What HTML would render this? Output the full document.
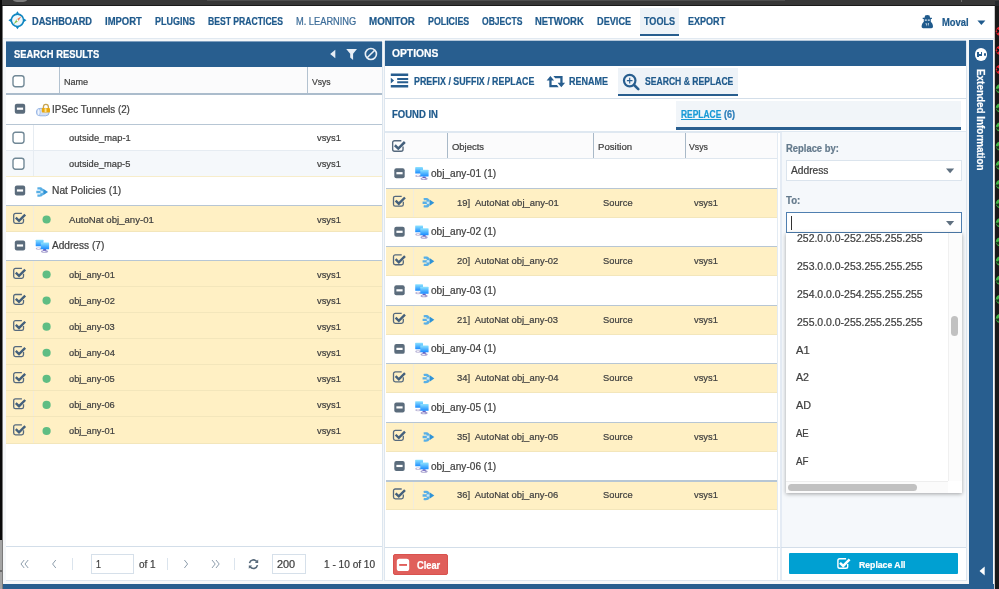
<!DOCTYPE html>
<html lang="en"><head><meta charset="utf-8"><title>Search &amp; Replace</title>
<style>
html,body{margin:0;padding:0}
body{width:999px;height:589px;position:relative;overflow:hidden;background:#1c1c1c;font-family:"Liberation Sans", sans-serif;}
#s div{position:absolute;box-sizing:border-box}
#s svg{position:absolute;overflow:visible}
#s,#t{position:absolute;left:0;top:0;width:999px;height:589px}
#t{will-change:transform}
#t span{position:absolute;white-space:pre;line-height:1;display:block;transform-origin:0 0;-webkit-text-stroke:0.22px currentColor}
</style></head>
<body>
<div id="s">
<svg width="0" height="0" style="left:0;top:0"><defs><linearGradient id="pcg" x1="0" y1="0" x2="0" y2="1"><stop offset="0" stop-color="#8fe4ff"/><stop offset="1" stop-color="#1a8bff"/></linearGradient></defs></svg>
<div style="left:0px;top:0px;width:999px;height:5px;background:#373737;"></div>
<div style="left:0px;top:5px;width:999px;height:1px;background:#1a1a1a;"></div>
<div style="left:207px;top:0px;width:578px;height:1px;background:#4e4e4e;"></div>
<div style="left:995px;top:1px;width:4px;height:5px;background:#25282b;"></div>
<div style="left:961px;top:0px;width:1px;height:2px;background:#6e6e6e;"></div>
<div style="left:12.6px;top:-2.4px;width:14.4px;height:4.6px;border-radius:50%;background:#7c7c7c"></div>
<div style="left:0px;top:0px;width:2.3px;height:540px;background:#0a0a0a;"></div>
<div style="left:0px;top:540px;width:2.3px;height:49px;background:#a4a4a4;"></div>
<div style="left:0px;top:570px;width:2.3px;height:2px;background:#6a6a6a;"></div>
<div style="left:2.3px;top:6px;width:0.9px;height:583px;background:#7a7a7a;"></div>
<div style="left:3.2px;top:6px;width:991.1px;height:583px;background:#f5f7f9;"></div>
<div style="left:994.3px;top:6px;width:0.9px;height:583px;background:#c9c9c9;"></div>
<div style="left:995.2px;top:6px;width:3.8px;height:583px;background:#191919;"></div>
<div style="left:3.2px;top:6px;width:991.1px;height:31.8px;background:#ffffff;"></div>
<div style="left:3.2px;top:37.8px;width:991.1px;height:1.5px;background:#e1e9f1;"></div>
<div style="left:640px;top:8px;width:39px;height:28px;background:#eef3f8;"></div>
<div style="left:640px;top:34px;width:39px;height:2px;background:#285e8f;"></div>
<div style="left:3px;top:584px;width:991px;height:5px;background:#285e8f;"></div>
<div style="left:5.5px;top:42px;width:377.0px;height:538.6px;background:#dde6ef;"></div>
<div style="left:6px;top:42px;width:376px;height:538px;background:#ffffff;"></div>
<div style="left:6px;top:42px;width:376px;height:25px;background:#285e8f;"></div>
<div style="left:6px;top:41px;width:376px;height:1px;background:#7f9fbf;"></div>
<div style="left:6px;top:67px;width:376px;height:26px;background:#fbfbfc;"></div>
<div style="left:6px;top:93px;width:376px;height:2px;background:#abbccc;"></div>
<div style="left:59px;top:67px;width:1px;height:26px;background:#b3c2d0;"></div>
<div style="left:307px;top:67px;width:1px;height:26px;background:#b3c2d0;"></div>
<div style="left:6px;top:95px;width:376px;height:30px;background:#ffffff;"></div>
<div style="left:6px;top:123.8px;width:376px;height:1.5px;background:#b7c6d4;"></div>
<div style="left:6px;top:125px;width:376px;height:26px;background:#ffffff;"></div>
<div style="left:6px;top:150px;width:376px;height:1px;background:#e6ecf2;"></div>
<div style="left:33px;top:125px;width:1px;height:25px;background:#e6ecf2;"></div>
<div style="left:6px;top:151px;width:376px;height:26px;background:#f5f8fb;"></div>
<div style="left:6px;top:176px;width:376px;height:1px;background:#e6ecf2;"></div>
<div style="left:33px;top:151px;width:1px;height:25px;background:#e6ecf2;"></div>
<div style="left:6px;top:177px;width:376px;height:29px;background:#ffffff;"></div>
<div style="left:6px;top:204.8px;width:376px;height:1.5px;background:#b7c6d4;"></div>
<div style="left:6px;top:176px;width:376px;height:1px;background:#f7edcb;"></div>
<div style="left:6px;top:206px;width:376px;height:26px;background:#fff0c4;"></div>
<div style="left:6px;top:231px;width:376px;height:1px;background:#f3e6bb;"></div>
<div style="left:33px;top:206px;width:1px;height:25px;background:#f1ecdc;"></div>
<div style="left:6px;top:232px;width:376px;height:29px;background:#ffffff;"></div>
<div style="left:6px;top:259.8px;width:376px;height:1.5px;background:#b7c6d4;"></div>
<div style="left:6px;top:261px;width:376px;height:26px;background:#fff0c4;"></div>
<div style="left:6px;top:286px;width:376px;height:1px;background:#f3e6bb;"></div>
<div style="left:33px;top:261px;width:1px;height:25px;background:#f1ecdc;"></div>
<div style="left:6px;top:287px;width:376px;height:26px;background:#fff0c4;"></div>
<div style="left:6px;top:312px;width:376px;height:1px;background:#f3e6bb;"></div>
<div style="left:33px;top:287px;width:1px;height:25px;background:#f1ecdc;"></div>
<div style="left:6px;top:313px;width:376px;height:26px;background:#fff0c4;"></div>
<div style="left:6px;top:338px;width:376px;height:1px;background:#f3e6bb;"></div>
<div style="left:33px;top:313px;width:1px;height:25px;background:#f1ecdc;"></div>
<div style="left:6px;top:339px;width:376px;height:26px;background:#fff0c4;"></div>
<div style="left:6px;top:364px;width:376px;height:1px;background:#f3e6bb;"></div>
<div style="left:33px;top:339px;width:1px;height:25px;background:#f1ecdc;"></div>
<div style="left:6px;top:365px;width:376px;height:26px;background:#fff0c4;"></div>
<div style="left:6px;top:390px;width:376px;height:1px;background:#f3e6bb;"></div>
<div style="left:33px;top:365px;width:1px;height:25px;background:#f1ecdc;"></div>
<div style="left:6px;top:391px;width:376px;height:26px;background:#fff0c4;"></div>
<div style="left:6px;top:416px;width:376px;height:1px;background:#f3e6bb;"></div>
<div style="left:33px;top:391px;width:1px;height:25px;background:#f1ecdc;"></div>
<div style="left:6px;top:417px;width:376px;height:27px;background:#fff0c4;"></div>
<div style="left:6px;top:443px;width:376px;height:1px;background:#f3e6bb;"></div>
<div style="left:33px;top:417px;width:1px;height:26px;background:#f1ecdc;"></div>
<div style="left:6px;top:546px;width:376px;height:1px;background:#d3dee9;"></div>
<div style="left:90.5px;top:553.5px;width:43px;height:20px;border:1px solid #d6e0ea;background:#fff"></div>
<div style="left:271.5px;top:553.5px;width:34.5px;height:20px;border:1px solid #d6e0ea;background:#fff"></div>
<div style="left:72px;top:558px;width:1px;height:12px;background:#dbe4ed;"></div>
<div style="left:167px;top:558px;width:1px;height:12px;background:#dbe4ed;"></div>
<div style="left:234px;top:558px;width:1px;height:12px;background:#dbe4ed;"></div>
<div style="left:384px;top:41px;width:583px;height:540px;background:#dde6ef;"></div>
<div style="left:385px;top:41px;width:581px;height:539px;background:#ffffff;"></div>
<div style="left:385px;top:41px;width:581px;height:25px;background:#285e8f;"></div>
<div style="left:385px;top:40px;width:581px;height:1px;background:#b3c6d9;"></div>
<div style="left:618px;top:68px;width:120px;height:28px;background:#eef3f8;"></div>
<div style="left:618px;top:94px;width:120px;height:2.4px;background:#285e8f;"></div>
<div style="left:385px;top:98px;width:581px;height:1px;background:#d3dee9;"></div>
<div style="left:676px;top:100.5px;width:285px;height:29.0px;background:#f1f5f9;"></div>
<div style="left:676px;top:127px;width:285px;height:2.5px;background:#285e8f;"></div>
<div style="left:385px;top:131px;width:581px;height:2px;background:#dfe8f1;"></div>
<div style="left:386px;top:133px;width:391px;height:25px;background:#fbfbfc;"></div>
<div style="left:386px;top:158px;width:391px;height:1px;background:#dfe7ef;"></div>
<div style="left:447px;top:133px;width:1px;height:25px;background:#a9b9c8;"></div>
<div style="left:593px;top:133px;width:1px;height:25px;background:#a9b9c8;"></div>
<div style="left:685px;top:133px;width:1px;height:25px;background:#a9b9c8;"></div>
<div style="left:777px;top:132px;width:1px;height:448px;background:#e3ebf3;"></div>
<div style="left:386px;top:159px;width:391px;height:29.8px;background:#ffffff;"></div>
<div style="left:386px;top:187.60000000000002px;width:391px;height:1.5px;background:#b7c6d4;"></div>
<div style="left:386px;top:188.8px;width:391px;height:28.8px;background:#fff0c4;"></div>
<div style="left:386px;top:216.6px;width:391px;height:1.0px;background:#f3e6bb;"></div>
<div style="left:413px;top:188.8px;width:1px;height:27.8px;background:#f1ecdc;"></div>
<div style="left:386px;top:217.6px;width:391px;height:29.74px;background:#ffffff;"></div>
<div style="left:386px;top:246.14000000000001px;width:391px;height:1.5px;background:#b7c6d4;"></div>
<div style="left:386px;top:247.34px;width:391px;height:28.8px;background:#fff0c4;"></div>
<div style="left:386px;top:275.14px;width:391px;height:1.0px;background:#f3e6bb;"></div>
<div style="left:413px;top:247.34px;width:1px;height:27.8px;background:#f1ecdc;"></div>
<div style="left:386px;top:276.14px;width:391px;height:29.74px;background:#ffffff;"></div>
<div style="left:386px;top:304.68px;width:391px;height:1.5px;background:#b7c6d4;"></div>
<div style="left:386px;top:305.88px;width:391px;height:28.8px;background:#fff0c4;"></div>
<div style="left:386px;top:333.68px;width:391px;height:1.0px;background:#f3e6bb;"></div>
<div style="left:413px;top:305.88px;width:1px;height:27.8px;background:#f1ecdc;"></div>
<div style="left:386px;top:334.68px;width:391px;height:29.74px;background:#ffffff;"></div>
<div style="left:386px;top:363.22px;width:391px;height:1.5px;background:#b7c6d4;"></div>
<div style="left:386px;top:364.42px;width:391px;height:28.8px;background:#fff0c4;"></div>
<div style="left:386px;top:392.22px;width:391px;height:1.0px;background:#f3e6bb;"></div>
<div style="left:413px;top:364.42px;width:1px;height:27.8px;background:#f1ecdc;"></div>
<div style="left:386px;top:393.22px;width:391px;height:29.74px;background:#ffffff;"></div>
<div style="left:386px;top:421.76px;width:391px;height:1.5px;background:#b7c6d4;"></div>
<div style="left:386px;top:422.96px;width:391px;height:28.8px;background:#fff0c4;"></div>
<div style="left:386px;top:450.76px;width:391px;height:1.0px;background:#f3e6bb;"></div>
<div style="left:413px;top:422.96px;width:1px;height:27.8px;background:#f1ecdc;"></div>
<div style="left:386px;top:451.76px;width:391px;height:29.74px;background:#ffffff;"></div>
<div style="left:386px;top:480.3px;width:391px;height:1.5px;background:#b7c6d4;"></div>
<div style="left:386px;top:481.5px;width:391px;height:28.8px;background:#fff0c4;"></div>
<div style="left:386px;top:509.3px;width:391px;height:1.0px;background:#f3e6bb;"></div>
<div style="left:413px;top:481.5px;width:1px;height:27.8px;background:#f1ecdc;"></div>
<div style="left:385px;top:547px;width:581px;height:1px;background:#d3dee9;"></div>
<div style="left:393px;top:554px;width:55px;height:21px;background:#e05f5b;border:1px solid #d9524e;border-radius:2px"></div>
<svg style="left:396px;top:558px" width="12.4" height="12.2" viewBox="0 0 12.4 12.2"><g transform="translate(0.800 0.800)"><rect width="12.4" height="12.2" rx="2.6" fill="#fff"/><rect x="2.4" y="5.2" width="7.8" height="1.9" fill="#e05f5b"/></g></svg>
<div style="left:780px;top:132px;width:186px;height:415px;background:#f5f8fb;"></div>
<div style="left:780px;top:132px;width:2px;height:448px;background:#e4ebf4;"></div>
<div style="left:786px;top:160px;width:176px;height:21px;border:1px solid #dbe4ed;background:#fff"></div>
<div style="left:786px;top:212px;width:176px;height:21px;border:1.3px solid #4f7fb0;background:#fff"></div>
<div style="left:791px;top:216px;width:1px;height:14px;background:#333;"></div>
<div style="left:786px;top:233px;width:176px;height:260px;background:#fff;box-shadow:0 1px 4px rgba(0,0,0,.35)"></div>
<div style="left:948px;top:233px;width:14px;height:248px;background:#fcfcfc;"></div>
<div style="left:948px;top:233px;width:1px;height:248px;background:#f0f0f0;"></div>
<div style="left:951.3px;top:316.3px;width:6.7px;height:20px;background:#c1c1c1;border-radius:3.5px"></div>
<div style="left:786px;top:481px;width:162px;height:12px;background:#fbfbfb;"></div>
<div style="left:786px;top:481px;width:162px;height:1px;background:#eeeeee;"></div>
<div style="left:787.7px;top:483.8px;width:129px;height:6.8px;background:#c1c1c1;border-radius:3.5px"></div>
<div style="left:781px;top:547px;width:185px;height:1px;background:#d3dee9;"></div>
<div style="left:789.2px;top:553.4px;width:168.8px;height:20.7px;background:#00a0d2;border-radius:1px"></div>
<div style="left:969px;top:40px;width:24px;height:544px;background:#285e8f;"></div>
<div style="left:974.9px;top:48.3px;width:12.4px;height:12.4px;border-radius:50%;background:#fff"></div>
<svg style="left:7px;top:10px" width="20" height="20" viewBox="-10 -10 20 20"><g transform="translate(0.450 0.250)"><circle r="6.15" fill="#eef7fb" stroke="#0f86c1" stroke-width="1.55"/><path d="M0-9L1.7-6.5H-1.7zM0 9L1.7 6.5H-1.7zM-9 0L-6.5-1.7V1.7zM9 0L6.5-1.7V1.7z" fill="#0f86c1"/><path d="M1.1-2.5L2.5-1.1L-1.1 2.5L-2.5 1.1z" fill="#b6dcef" opacity=".7"/><path d="M3.9-3.9L0.85 0.85L-0.85-0.85z" fill="#f2723f"/><path d="M-3.9 3.9L0.85 0.85L-0.85-0.85z" fill="#86c440"/><circle r="0.9" fill="#ffffff"/></g></svg>
<svg style="left:330px;top:49px" width="6" height="9" viewBox="0 0 6 9"><g transform="translate(0.000 0.500)"><path d="M5.3 0.3V8.7L0.2 4.5z" fill="#e6edf5"/></g></svg>
<svg style="left:345px;top:48px" width="11.4" height="11.2" viewBox="0 0 11.4 11.2"><g transform="translate(0.900 0.900)"><path d="M0.3 0.2H11.1L7.2 4.9V11L4.3 8.7V4.9z" fill="#e9eff6"/></g></svg>
<svg style="left:364px;top:47px" width="12.6" height="12.6" viewBox="0 0 12.6 12.6"><g transform="translate(0.600 0.700)"><circle cx="6.3" cy="6.3" r="5.55" fill="none" stroke="#e9eff6" stroke-width="1.6"/><path d="M2.5 10.1L10.1 2.5" stroke="#e9eff6" stroke-width="1.6"/></g></svg>
<svg style="left:36px;top:103px" width="15" height="13" viewBox="36 103.5 15 13"><g transform="translate(0.000 0.500)"><rect x="36.4" y="108.4" width="12.8" height="7.4" rx="3.6" fill="#d2e0f6" stroke="#8fb0e2" stroke-width=".9"/><ellipse cx="38.6" cy="112.1" rx="1.6" ry="3.2" fill="#f1f6fd" stroke="#9bb8e6" stroke-width=".7"/><path d="M43.4 108.3V107a2.5 2.7 0 0 1 5 0v1.3" fill="none" stroke="#c7a452" stroke-width="1.3"/><rect x="41.8" y="107.9" width="8.2" height="4.6" rx=".9" fill="#e9a70e"/><rect x="44.6" y="108.3" width="1.9" height="3.8" fill="#fbe392"/></g></svg>
<svg style="left:36px;top:186px" width="12" height="10.4" viewBox="0 0 12 10.4"><g transform="translate(0.100 0.800)"><path d="M1.1 0.7C3.5.1 6.7.3 6.9 2.6V7.8C6.7 10.1 3.5 10.3 1.1 9.7L1.5 7.5C3.1 7.9 4.3 7.8 4.4 6.9V6.4H0.2V4H4.4V3.5C4.3 2.6 3.1 2.5 1.5 2.9z" fill="#58afe6"/><path d="M7.1 1.9L11.9 5.2L7.1 8.5z" fill="#2f93d6"/><circle cx="5.6" cy="5.2" r="1.35" fill="#c9e8f9"/></g></svg>
<svg style="left:35px;top:239px" width="13.6" height="13.2" viewBox="0 0 13.6 13.2"><g transform="translate(0.700 0.700)"><ellipse cx="3" cy="8.9" rx="3" ry="1.2" fill="#b8b3d6"/><ellipse cx="2.8" cy="8.7" rx="1.4" ry=".6" fill="#f4f4fa"/><rect x="0" y="0" width="7.8" height="6.6" rx=".5" fill="url(#pcg)"/><ellipse cx="8.9" cy="11.8" rx="3.6" ry="1.3" fill="#a9a3d0"/><ellipse cx="8.4" cy="11.6" rx="1.6" ry=".65" fill="#f4f4fa"/><path d="M7.6 9.4h2.6l.6 1.6h-3.6z" fill="#6a5fc0"/><rect x="5.1" y="2.7" width="8.3" height="6.9" rx=".5" fill="url(#pcg)"/></g></svg>
<svg style="left:390px;top:73px" width="17.4" height="13.9" viewBox="0 0 17.4 13.9"><g transform="translate(0.800 0.600)"><path d="M0 0H17.4V2.3H0zM6.4 4.3H17.4V6.4H6.4zM6.4 7.6H17.4V9.7H6.4zM0 11.5H17.4V13.9H0zM0 4.2L3.3 7L0 9.8z" fill="#285e8f"/></g></svg>
<svg style="left:546px;top:75px" width="18.8" height="11.4" viewBox="0 0 18.8 11.4"><g transform="translate(0.400 0.900)"><path d="M4 0L7.7 4.7H5.2V9.1H10.6L12.3 11.3H2.9V4.7H0.2zM7 0H16.2V6.8H18.7L14.9 11.4L11.2 6.8H13.9V2.3H8.8z" fill="#285e8f"/></g></svg>
<svg style="left:622px;top:73px" width="17" height="17" viewBox="0 0 17 17"><g transform="translate(0.600 0.500)"><circle cx="7.1" cy="7.1" r="5.75" fill="none" stroke="#285e8f" stroke-width="2.2"/><path d="M11.5 11.5L15.7 15.6" stroke="#285e8f" stroke-width="2.6" stroke-linecap="round"/><path d="M4.3 7.1H9.9M7.1 4.3V9.9" stroke="#285e8f" stroke-width="1.15"/></g></svg>
<svg style="left:921px;top:15px" width="11.6" height="13.3" viewBox="0 0 11.6 13.3"><g transform="translate(0.500 0.000)"><path d="M3.6 0.4Q5.8-.4 8 .4L8.6 2.7H10.4V3.9H9.3V6.8L10.6 8.2Q11.6 9.6 11.5 12.1Q11.3 13.2 10 13.2H1.6Q.3 13.2.1 12.1Q0 9.6 1 8.2L2.3 6.8V3.9H1.2V2.7H3z" fill="#1f5a8c"/><path d="M3.3 4.6H5.3V5.7H3.3zM6.3 4.6H8.3V5.7H6.3z" fill="#dce8f2"/><path d="M4 8L5.3 8.4L5.1 11.4zM7.6 8L6.3 8.4L6.5 11.4z" fill="#e8f0f7"/></g></svg>
<svg style="left:977px;top:20px" width="8" height="4.6" viewBox="0 0 8 4.6"><g transform="translate(0.400 0.400)"><path d="M0 0H8L4 4.6z" fill="#1f5a8c"/></g></svg>
<svg style="left:20px;top:559px" width="8.4" height="8.8" viewBox="0 0 8.4 8.8"><g transform="translate(0.400 0.600)"><path d="M3.8.4L.6 4.4 3.8 8.4M7.8.4L4.6 4.4 7.8 8.4" fill="none" stroke="#8c9cab" stroke-width="1"/></g></svg>
<svg style="left:51px;top:559px" width="5" height="8.8" viewBox="0 0 5 8.8"><g transform="translate(0.600 0.600)"><path d="M4.2.4L1 4.4 4.2 8.4" fill="none" stroke="#8c9cab" stroke-width="1"/></g></svg>
<svg style="left:183px;top:559px" width="5" height="8.8" viewBox="0 0 5 8.8"><g transform="translate(0.600 0.600)"><path d="M.8.4L4 4.4.8 8.4" fill="none" stroke="#8c9cab" stroke-width="1"/></g></svg>
<svg style="left:211px;top:559px" width="8.4" height="8.8" viewBox="0 0 8.4 8.8"><g transform="translate(0.400 0.600)"><path d="M.6.4L3.8 4.4.6 8.4M4.6.4L7.8 4.4 4.6 8.4" fill="none" stroke="#8c9cab" stroke-width="1"/></g></svg>
<svg style="left:248px;top:559px" width="10.2" height="10.4" viewBox="0 0 10.2 10.4"><g transform="translate(0.400 0.000)"><g transform="translate(10.2 0) scale(-1 1)"><path d="M9.1 4.2A4.1 4.1 0 0 0 1.8 2.6M1.1 6.2A4.1 4.1 0 0 0 8.4 7.8" fill="none" stroke="#566879" stroke-width="1.6"/><path d="M0.4.6V3.9H3.7zM9.8 9.8V6.5H6.5z" fill="#566879"/></g></g></svg>
<svg style="left:836px;top:556px" width="14" height="14" viewBox="0 0 14 14"><g transform="translate(0.900 0.400)"><path d="M9.2 2.4H2.8a1.8 1.8 0 0 0-1.8 1.8v5.9a1.8 1.8 0 0 0 1.8 1.8h6.2a1.8 1.8 0 0 0 1.8-1.8V7.5" fill="none" stroke="#fff" stroke-width="1.4"/><path d="M3.1 6.4l3.2 3.1 6.4-6.6" fill="none" stroke="#fff" stroke-width="2.5"/></g></svg>
<div style="left:977.3px;top:53.5px;width:5.2px;height:2.1px;background:#285e8f;"></div>
<div style="left:977.3px;top:52.3px;width:1.4px;height:4.5px;background:#285e8f;"></div>
<div style="left:981.3px;top:52.3px;width:1.2px;height:1.7px;background:#285e8f;"></div>
<div style="left:983.6px;top:53.4px;width:2.2px;height:2.2px;border-radius:1px;background:#285e8f"></div>
<svg style="left:995px;top:26px" width="10" height="10" viewBox="0 0 10 10"><g transform="translate(0.400 0.200)"><circle cx="5" cy="5" r="4.6" fill="#e8222e"/><path d="M1.3 3.2L4.9 6.8M4.9 3.2L1.3 6.8" stroke="#111" stroke-width="1.4"/></g></svg>
<svg style="left:995px;top:45px" width="10" height="10" viewBox="0 0 10 10"><g transform="translate(0.400 0.350)"><circle cx="5" cy="5" r="4.6" fill="#e8222e"/><path d="M1.3 3.2L4.9 6.8M4.9 3.2L1.3 6.8" stroke="#111" stroke-width="1.4"/></g></svg>
<svg style="left:995px;top:64px" width="10" height="10" viewBox="0 0 10 10"><g transform="translate(0.400 0.500)"><circle cx="5" cy="5" r="4.6" fill="#e8222e"/><path d="M1.3 3.2L4.9 6.8M4.9 3.2L1.3 6.8" stroke="#111" stroke-width="1.4"/></g></svg>
<svg style="left:995px;top:83px" width="10" height="10" viewBox="0 0 10 10"><g transform="translate(0.400 0.650)"><circle cx="5" cy="5" r="4.6" fill="#45b649"/><path d="M1 5.2L2.7 7L5.2 2.6" fill="none" stroke="#16351a" stroke-width="1.6"/></g></svg>
<svg style="left:995px;top:102px" width="10" height="10" viewBox="0 0 10 10"><g transform="translate(0.400 0.800)"><circle cx="5" cy="5" r="4.6" fill="#45b649"/><path d="M1 5.2L2.7 7L5.2 2.6" fill="none" stroke="#16351a" stroke-width="1.6"/></g></svg>
<svg style="left:995px;top:121px" width="10" height="10" viewBox="0 0 10 10"><g transform="translate(0.400 0.950)"><circle cx="5" cy="5" r="4.6" fill="#45b649"/><path d="M1 5.2L2.7 7L5.2 2.6" fill="none" stroke="#16351a" stroke-width="1.6"/></g></svg>
<svg style="left:995px;top:141px" width="10" height="10" viewBox="0 0 10 10"><g transform="translate(0.400 0.100)"><circle cx="5" cy="5" r="4.6" fill="#45b649"/><path d="M1 5.2L2.7 7L5.2 2.6" fill="none" stroke="#16351a" stroke-width="1.6"/></g></svg>
<svg style="left:995px;top:160px" width="10" height="10" viewBox="0 0 10 10"><g transform="translate(0.400 0.250)"><circle cx="5" cy="5" r="4.6" fill="#45b649"/><path d="M1 5.2L2.7 7L5.2 2.6" fill="none" stroke="#16351a" stroke-width="1.6"/></g></svg>
<svg style="left:995px;top:179px" width="10" height="10" viewBox="0 0 10 10"><g transform="translate(0.400 0.400)"><circle cx="5" cy="5" r="4.6" fill="#45b649"/><path d="M1 5.2L2.7 7L5.2 2.6" fill="none" stroke="#16351a" stroke-width="1.6"/></g></svg>
<svg style="left:995px;top:198px" width="10" height="10" viewBox="0 0 10 10"><g transform="translate(0.400 0.550)"><circle cx="5" cy="5" r="4.6" fill="#45b649"/><path d="M1 5.2L2.7 7L5.2 2.6" fill="none" stroke="#16351a" stroke-width="1.6"/></g></svg>
<svg style="left:995px;top:217px" width="10" height="10" viewBox="0 0 10 10"><g transform="translate(0.400 0.700)"><circle cx="5" cy="5" r="4.6" fill="#45b649"/><path d="M1 5.2L2.7 7L5.2 2.6" fill="none" stroke="#16351a" stroke-width="1.6"/></g></svg>
<svg style="left:995px;top:236px" width="10" height="10" viewBox="0 0 10 10"><g transform="translate(0.400 0.850)"><circle cx="5" cy="5" r="4.6" fill="#45b649"/><path d="M1 5.2L2.7 7L5.2 2.6" fill="none" stroke="#16351a" stroke-width="1.6"/></g></svg>
<svg style="left:995px;top:256px" width="10" height="10" viewBox="0 0 10 10"><g transform="translate(0.400 0.000)"><circle cx="5" cy="5" r="4.6" fill="#45b649"/><path d="M1 5.2L2.7 7L5.2 2.6" fill="none" stroke="#16351a" stroke-width="1.6"/></g></svg>
<svg style="left:995px;top:275px" width="10" height="10" viewBox="0 0 10 10"><g transform="translate(0.400 0.150)"><circle cx="5" cy="5" r="4.6" fill="#45b649"/><path d="M1 5.2L2.7 7L5.2 2.6" fill="none" stroke="#16351a" stroke-width="1.6"/></g></svg>
<svg style="left:995px;top:294px" width="10" height="10" viewBox="0 0 10 10"><g transform="translate(0.400 0.300)"><circle cx="5" cy="5" r="4.6" fill="#45b649"/><path d="M1 5.2L2.7 7L5.2 2.6" fill="none" stroke="#16351a" stroke-width="1.6"/></g></svg>
<svg style="left:995px;top:313px" width="10" height="10" viewBox="0 0 10 10"><g transform="translate(0.400 0.450)"><circle cx="5" cy="5" r="4.6" fill="#45b649"/><path d="M1 5.2L2.7 7L5.2 2.6" fill="none" stroke="#16351a" stroke-width="1.6"/></g></svg>
<svg style="left:415px;top:167px" width="13.6" height="13.2" viewBox="0 0 13.6 13.2"><g transform="translate(0.200 0.000)"><ellipse cx="3" cy="8.9" rx="3" ry="1.2" fill="#b8b3d6"/><ellipse cx="2.8" cy="8.7" rx="1.4" ry=".6" fill="#f4f4fa"/><rect x="0" y="0" width="7.8" height="6.6" rx=".5" fill="url(#pcg)"/><ellipse cx="8.9" cy="11.8" rx="3.6" ry="1.3" fill="#a9a3d0"/><ellipse cx="8.4" cy="11.6" rx="1.6" ry=".65" fill="#f4f4fa"/><path d="M7.6 9.4h2.6l.6 1.6h-3.6z" fill="#6a5fc0"/><rect x="5.1" y="2.7" width="8.3" height="6.9" rx=".5" fill="url(#pcg)"/></g></svg>
<svg style="left:422px;top:197px" width="12" height="10.4" viewBox="0 0 12 10.4"><g transform="translate(0.400 0.600)"><path d="M1.1 0.7C3.5.1 6.7.3 6.9 2.6V7.8C6.7 10.1 3.5 10.3 1.1 9.7L1.5 7.5C3.1 7.9 4.3 7.8 4.4 6.9V6.4H0.2V4H4.4V3.5C4.3 2.6 3.1 2.5 1.5 2.9z" fill="#58afe6"/><path d="M7.1 1.9L11.9 5.2L7.1 8.5z" fill="#2f93d6"/><circle cx="5.6" cy="5.2" r="1.35" fill="#c9e8f9"/></g></svg>
<svg style="left:415px;top:225px" width="13.6" height="13.2" viewBox="0 0 13.6 13.2"><g transform="translate(0.200 0.600)"><ellipse cx="3" cy="8.9" rx="3" ry="1.2" fill="#b8b3d6"/><ellipse cx="2.8" cy="8.7" rx="1.4" ry=".6" fill="#f4f4fa"/><rect x="0" y="0" width="7.8" height="6.6" rx=".5" fill="url(#pcg)"/><ellipse cx="8.9" cy="11.8" rx="3.6" ry="1.3" fill="#a9a3d0"/><ellipse cx="8.4" cy="11.6" rx="1.6" ry=".65" fill="#f4f4fa"/><path d="M7.6 9.4h2.6l.6 1.6h-3.6z" fill="#6a5fc0"/><rect x="5.1" y="2.7" width="8.3" height="6.9" rx=".5" fill="url(#pcg)"/></g></svg>
<svg style="left:422px;top:256px" width="12" height="10.4" viewBox="0 0 12 10.4"><g transform="translate(0.400 0.140)"><path d="M1.1 0.7C3.5.1 6.7.3 6.9 2.6V7.8C6.7 10.1 3.5 10.3 1.1 9.7L1.5 7.5C3.1 7.9 4.3 7.8 4.4 6.9V6.4H0.2V4H4.4V3.5C4.3 2.6 3.1 2.5 1.5 2.9z" fill="#58afe6"/><path d="M7.1 1.9L11.9 5.2L7.1 8.5z" fill="#2f93d6"/><circle cx="5.6" cy="5.2" r="1.35" fill="#c9e8f9"/></g></svg>
<svg style="left:415px;top:284px" width="13.6" height="13.2" viewBox="0 0 13.6 13.2"><g transform="translate(0.200 0.140)"><ellipse cx="3" cy="8.9" rx="3" ry="1.2" fill="#b8b3d6"/><ellipse cx="2.8" cy="8.7" rx="1.4" ry=".6" fill="#f4f4fa"/><rect x="0" y="0" width="7.8" height="6.6" rx=".5" fill="url(#pcg)"/><ellipse cx="8.9" cy="11.8" rx="3.6" ry="1.3" fill="#a9a3d0"/><ellipse cx="8.4" cy="11.6" rx="1.6" ry=".65" fill="#f4f4fa"/><path d="M7.6 9.4h2.6l.6 1.6h-3.6z" fill="#6a5fc0"/><rect x="5.1" y="2.7" width="8.3" height="6.9" rx=".5" fill="url(#pcg)"/></g></svg>
<svg style="left:422px;top:314px" width="12" height="10.4" viewBox="0 0 12 10.4"><g transform="translate(0.400 0.680)"><path d="M1.1 0.7C3.5.1 6.7.3 6.9 2.6V7.8C6.7 10.1 3.5 10.3 1.1 9.7L1.5 7.5C3.1 7.9 4.3 7.8 4.4 6.9V6.4H0.2V4H4.4V3.5C4.3 2.6 3.1 2.5 1.5 2.9z" fill="#58afe6"/><path d="M7.1 1.9L11.9 5.2L7.1 8.5z" fill="#2f93d6"/><circle cx="5.6" cy="5.2" r="1.35" fill="#c9e8f9"/></g></svg>
<svg style="left:415px;top:342px" width="13.6" height="13.2" viewBox="0 0 13.6 13.2"><g transform="translate(0.200 0.680)"><ellipse cx="3" cy="8.9" rx="3" ry="1.2" fill="#b8b3d6"/><ellipse cx="2.8" cy="8.7" rx="1.4" ry=".6" fill="#f4f4fa"/><rect x="0" y="0" width="7.8" height="6.6" rx=".5" fill="url(#pcg)"/><ellipse cx="8.9" cy="11.8" rx="3.6" ry="1.3" fill="#a9a3d0"/><ellipse cx="8.4" cy="11.6" rx="1.6" ry=".65" fill="#f4f4fa"/><path d="M7.6 9.4h2.6l.6 1.6h-3.6z" fill="#6a5fc0"/><rect x="5.1" y="2.7" width="8.3" height="6.9" rx=".5" fill="url(#pcg)"/></g></svg>
<svg style="left:422px;top:373px" width="12" height="10.4" viewBox="0 0 12 10.4"><g transform="translate(0.400 0.220)"><path d="M1.1 0.7C3.5.1 6.7.3 6.9 2.6V7.8C6.7 10.1 3.5 10.3 1.1 9.7L1.5 7.5C3.1 7.9 4.3 7.8 4.4 6.9V6.4H0.2V4H4.4V3.5C4.3 2.6 3.1 2.5 1.5 2.9z" fill="#58afe6"/><path d="M7.1 1.9L11.9 5.2L7.1 8.5z" fill="#2f93d6"/><circle cx="5.6" cy="5.2" r="1.35" fill="#c9e8f9"/></g></svg>
<svg style="left:415px;top:401px" width="13.6" height="13.2" viewBox="0 0 13.6 13.2"><g transform="translate(0.200 0.220)"><ellipse cx="3" cy="8.9" rx="3" ry="1.2" fill="#b8b3d6"/><ellipse cx="2.8" cy="8.7" rx="1.4" ry=".6" fill="#f4f4fa"/><rect x="0" y="0" width="7.8" height="6.6" rx=".5" fill="url(#pcg)"/><ellipse cx="8.9" cy="11.8" rx="3.6" ry="1.3" fill="#a9a3d0"/><ellipse cx="8.4" cy="11.6" rx="1.6" ry=".65" fill="#f4f4fa"/><path d="M7.6 9.4h2.6l.6 1.6h-3.6z" fill="#6a5fc0"/><rect x="5.1" y="2.7" width="8.3" height="6.9" rx=".5" fill="url(#pcg)"/></g></svg>
<svg style="left:422px;top:431px" width="12" height="10.4" viewBox="0 0 12 10.4"><g transform="translate(0.400 0.760)"><path d="M1.1 0.7C3.5.1 6.7.3 6.9 2.6V7.8C6.7 10.1 3.5 10.3 1.1 9.7L1.5 7.5C3.1 7.9 4.3 7.8 4.4 6.9V6.4H0.2V4H4.4V3.5C4.3 2.6 3.1 2.5 1.5 2.9z" fill="#58afe6"/><path d="M7.1 1.9L11.9 5.2L7.1 8.5z" fill="#2f93d6"/><circle cx="5.6" cy="5.2" r="1.35" fill="#c9e8f9"/></g></svg>
<svg style="left:415px;top:459px" width="13.6" height="13.2" viewBox="0 0 13.6 13.2"><g transform="translate(0.200 0.760)"><ellipse cx="3" cy="8.9" rx="3" ry="1.2" fill="#b8b3d6"/><ellipse cx="2.8" cy="8.7" rx="1.4" ry=".6" fill="#f4f4fa"/><rect x="0" y="0" width="7.8" height="6.6" rx=".5" fill="url(#pcg)"/><ellipse cx="8.9" cy="11.8" rx="3.6" ry="1.3" fill="#a9a3d0"/><ellipse cx="8.4" cy="11.6" rx="1.6" ry=".65" fill="#f4f4fa"/><path d="M7.6 9.4h2.6l.6 1.6h-3.6z" fill="#6a5fc0"/><rect x="5.1" y="2.7" width="8.3" height="6.9" rx=".5" fill="url(#pcg)"/></g></svg>
<svg style="left:422px;top:490px" width="12" height="10.4" viewBox="0 0 12 10.4"><g transform="translate(0.400 0.300)"><path d="M1.1 0.7C3.5.1 6.7.3 6.9 2.6V7.8C6.7 10.1 3.5 10.3 1.1 9.7L1.5 7.5C3.1 7.9 4.3 7.8 4.4 6.9V6.4H0.2V4H4.4V3.5C4.3 2.6 3.1 2.5 1.5 2.9z" fill="#58afe6"/><path d="M7.1 1.9L11.9 5.2L7.1 8.5z" fill="#2f93d6"/><circle cx="5.6" cy="5.2" r="1.35" fill="#c9e8f9"/></g></svg>
<svg style="left:12px;top:211px" width="14" height="14" viewBox="0 0 14 14"><g transform="translate(0.700 0.500)"><path d="M9.2 1.9H2.8a1.8 1.8 0 0 0-1.8 1.8v6.3a1.8 1.8 0 0 0 1.8 1.8h6.2a1.8 1.8 0 0 0 1.8-1.8V7.3" fill="none" stroke="#56697d" stroke-width="1.3"/><path d="M3.1 6.2l3.2 3.1 6.2-6.2" fill="none" stroke="#44607c" stroke-width="2.4"/></g></svg>
<svg style="left:12px;top:266px" width="14" height="14" viewBox="0 0 14 14"><g transform="translate(0.700 0.500)"><path d="M9.2 1.9H2.8a1.8 1.8 0 0 0-1.8 1.8v6.3a1.8 1.8 0 0 0 1.8 1.8h6.2a1.8 1.8 0 0 0 1.8-1.8V7.3" fill="none" stroke="#56697d" stroke-width="1.3"/><path d="M3.1 6.2l3.2 3.1 6.2-6.2" fill="none" stroke="#44607c" stroke-width="2.4"/></g></svg>
<svg style="left:12px;top:292px" width="14" height="14" viewBox="0 0 14 14"><g transform="translate(0.700 0.580)"><path d="M9.2 1.9H2.8a1.8 1.8 0 0 0-1.8 1.8v6.3a1.8 1.8 0 0 0 1.8 1.8h6.2a1.8 1.8 0 0 0 1.8-1.8V7.3" fill="none" stroke="#56697d" stroke-width="1.3"/><path d="M3.1 6.2l3.2 3.1 6.2-6.2" fill="none" stroke="#44607c" stroke-width="2.4"/></g></svg>
<svg style="left:12px;top:318px" width="14" height="14" viewBox="0 0 14 14"><g transform="translate(0.700 0.660)"><path d="M9.2 1.9H2.8a1.8 1.8 0 0 0-1.8 1.8v6.3a1.8 1.8 0 0 0 1.8 1.8h6.2a1.8 1.8 0 0 0 1.8-1.8V7.3" fill="none" stroke="#56697d" stroke-width="1.3"/><path d="M3.1 6.2l3.2 3.1 6.2-6.2" fill="none" stroke="#44607c" stroke-width="2.4"/></g></svg>
<svg style="left:12px;top:344px" width="14" height="14" viewBox="0 0 14 14"><g transform="translate(0.700 0.740)"><path d="M9.2 1.9H2.8a1.8 1.8 0 0 0-1.8 1.8v6.3a1.8 1.8 0 0 0 1.8 1.8h6.2a1.8 1.8 0 0 0 1.8-1.8V7.3" fill="none" stroke="#56697d" stroke-width="1.3"/><path d="M3.1 6.2l3.2 3.1 6.2-6.2" fill="none" stroke="#44607c" stroke-width="2.4"/></g></svg>
<svg style="left:12px;top:370px" width="14" height="14" viewBox="0 0 14 14"><g transform="translate(0.700 0.820)"><path d="M9.2 1.9H2.8a1.8 1.8 0 0 0-1.8 1.8v6.3a1.8 1.8 0 0 0 1.8 1.8h6.2a1.8 1.8 0 0 0 1.8-1.8V7.3" fill="none" stroke="#56697d" stroke-width="1.3"/><path d="M3.1 6.2l3.2 3.1 6.2-6.2" fill="none" stroke="#44607c" stroke-width="2.4"/></g></svg>
<svg style="left:12px;top:396px" width="14" height="14" viewBox="0 0 14 14"><g transform="translate(0.700 0.900)"><path d="M9.2 1.9H2.8a1.8 1.8 0 0 0-1.8 1.8v6.3a1.8 1.8 0 0 0 1.8 1.8h6.2a1.8 1.8 0 0 0 1.8-1.8V7.3" fill="none" stroke="#56697d" stroke-width="1.3"/><path d="M3.1 6.2l3.2 3.1 6.2-6.2" fill="none" stroke="#44607c" stroke-width="2.4"/></g></svg>
<svg style="left:12px;top:422px" width="14" height="14" viewBox="0 0 14 14"><g transform="translate(0.700 0.980)"><path d="M9.2 1.9H2.8a1.8 1.8 0 0 0-1.8 1.8v6.3a1.8 1.8 0 0 0 1.8 1.8h6.2a1.8 1.8 0 0 0 1.8-1.8V7.3" fill="none" stroke="#56697d" stroke-width="1.3"/><path d="M3.1 6.2l3.2 3.1 6.2-6.2" fill="none" stroke="#44607c" stroke-width="2.4"/></g></svg>
<svg style="left:391px;top:138px" width="14.84" height="14.84" viewBox="0 0 14 14"><g transform="translate(0.566 0.660)"><path d="M9.2 1.9H2.8a1.8 1.8 0 0 0-1.8 1.8v6.3a1.8 1.8 0 0 0 1.8 1.8h6.2a1.8 1.8 0 0 0 1.8-1.8V7.3" fill="none" stroke="#56697d" stroke-width="1.3"/><path d="M3.1 6.2l3.2 3.1 6.2-6.2" fill="none" stroke="#44607c" stroke-width="2.4"/></g></svg>
<svg style="left:392px;top:194px" width="14" height="14" viewBox="0 0 14 14"><g transform="translate(0.500 0.400)"><path d="M9.2 1.9H2.8a1.8 1.8 0 0 0-1.8 1.8v6.3a1.8 1.8 0 0 0 1.8 1.8h6.2a1.8 1.8 0 0 0 1.8-1.8V7.3" fill="none" stroke="#56697d" stroke-width="1.3"/><path d="M3.1 6.2l3.2 3.1 6.2-6.2" fill="none" stroke="#44607c" stroke-width="2.4"/></g></svg>
<svg style="left:392px;top:252px" width="14" height="14" viewBox="0 0 14 14"><g transform="translate(0.500 0.940)"><path d="M9.2 1.9H2.8a1.8 1.8 0 0 0-1.8 1.8v6.3a1.8 1.8 0 0 0 1.8 1.8h6.2a1.8 1.8 0 0 0 1.8-1.8V7.3" fill="none" stroke="#56697d" stroke-width="1.3"/><path d="M3.1 6.2l3.2 3.1 6.2-6.2" fill="none" stroke="#44607c" stroke-width="2.4"/></g></svg>
<svg style="left:392px;top:311px" width="14" height="14" viewBox="0 0 14 14"><g transform="translate(0.500 0.480)"><path d="M9.2 1.9H2.8a1.8 1.8 0 0 0-1.8 1.8v6.3a1.8 1.8 0 0 0 1.8 1.8h6.2a1.8 1.8 0 0 0 1.8-1.8V7.3" fill="none" stroke="#56697d" stroke-width="1.3"/><path d="M3.1 6.2l3.2 3.1 6.2-6.2" fill="none" stroke="#44607c" stroke-width="2.4"/></g></svg>
<svg style="left:392px;top:370px" width="14" height="14" viewBox="0 0 14 14"><g transform="translate(0.500 0.020)"><path d="M9.2 1.9H2.8a1.8 1.8 0 0 0-1.8 1.8v6.3a1.8 1.8 0 0 0 1.8 1.8h6.2a1.8 1.8 0 0 0 1.8-1.8V7.3" fill="none" stroke="#56697d" stroke-width="1.3"/><path d="M3.1 6.2l3.2 3.1 6.2-6.2" fill="none" stroke="#44607c" stroke-width="2.4"/></g></svg>
<svg style="left:392px;top:428px" width="14" height="14" viewBox="0 0 14 14"><g transform="translate(0.500 0.560)"><path d="M9.2 1.9H2.8a1.8 1.8 0 0 0-1.8 1.8v6.3a1.8 1.8 0 0 0 1.8 1.8h6.2a1.8 1.8 0 0 0 1.8-1.8V7.3" fill="none" stroke="#56697d" stroke-width="1.3"/><path d="M3.1 6.2l3.2 3.1 6.2-6.2" fill="none" stroke="#44607c" stroke-width="2.4"/></g></svg>
<svg style="left:392px;top:487px" width="14" height="14" viewBox="0 0 14 14"><g transform="translate(0.500 0.100)"><path d="M9.2 1.9H2.8a1.8 1.8 0 0 0-1.8 1.8v6.3a1.8 1.8 0 0 0 1.8 1.8h6.2a1.8 1.8 0 0 0 1.8-1.8V7.3" fill="none" stroke="#56697d" stroke-width="1.3"/><path d="M3.1 6.2l3.2 3.1 6.2-6.2" fill="none" stroke="#44607c" stroke-width="2.4"/></g></svg>
<svg style="left:14px;top:103px" width="10.4" height="10" viewBox="0 0 10.4 10"><g transform="translate(0.800 0.700)"><rect x="0" y="0" width="10.4" height="10" rx="2" fill="#5b6c7c"/><rect x="2.1" y="3.9" width="6.2" height="2.2" fill="#fff"/></g></svg>
<svg style="left:14px;top:185px" width="10.4" height="10" viewBox="0 0 10.4 10"><g transform="translate(0.800 0.500)"><rect x="0" y="0" width="10.4" height="10" rx="2" fill="#5b6c7c"/><rect x="2.1" y="3.9" width="6.2" height="2.2" fill="#fff"/></g></svg>
<svg style="left:14px;top:240px" width="10.4" height="10" viewBox="0 0 10.4 10"><g transform="translate(0.800 0.500)"><rect x="0" y="0" width="10.4" height="10" rx="2" fill="#5b6c7c"/><rect x="2.1" y="3.9" width="6.2" height="2.2" fill="#fff"/></g></svg>
<svg style="left:394px;top:168px" width="10.4" height="10" viewBox="0 0 10.4 10"><g transform="translate(0.300 0.200)"><rect x="0" y="0" width="10.4" height="10" rx="2" fill="#5b6c7c"/><rect x="2.1" y="3.9" width="6.2" height="2.2" fill="#fff"/></g></svg>
<svg style="left:394px;top:226px" width="10.4" height="10" viewBox="0 0 10.4 10"><g transform="translate(0.300 0.800)"><rect x="0" y="0" width="10.4" height="10" rx="2" fill="#5b6c7c"/><rect x="2.1" y="3.9" width="6.2" height="2.2" fill="#fff"/></g></svg>
<svg style="left:394px;top:285px" width="10.4" height="10" viewBox="0 0 10.4 10"><g transform="translate(0.300 0.340)"><rect x="0" y="0" width="10.4" height="10" rx="2" fill="#5b6c7c"/><rect x="2.1" y="3.9" width="6.2" height="2.2" fill="#fff"/></g></svg>
<svg style="left:394px;top:343px" width="10.4" height="10" viewBox="0 0 10.4 10"><g transform="translate(0.300 0.880)"><rect x="0" y="0" width="10.4" height="10" rx="2" fill="#5b6c7c"/><rect x="2.1" y="3.9" width="6.2" height="2.2" fill="#fff"/></g></svg>
<svg style="left:394px;top:402px" width="10.4" height="10" viewBox="0 0 10.4 10"><g transform="translate(0.300 0.420)"><rect x="0" y="0" width="10.4" height="10" rx="2" fill="#5b6c7c"/><rect x="2.1" y="3.9" width="6.2" height="2.2" fill="#fff"/></g></svg>
<svg style="left:394px;top:460px" width="10.4" height="10" viewBox="0 0 10.4 10"><g transform="translate(0.300 0.960)"><rect x="0" y="0" width="10.4" height="10" rx="2" fill="#5b6c7c"/><rect x="2.1" y="3.9" width="6.2" height="2.2" fill="#fff"/></g></svg>
<svg style="left:12px;top:131px" width="12.4" height="12.4" viewBox="0 0 12.4 12.4"><g transform="translate(0.300 0.500)"><rect x=".7" y=".7" width="11" height="11" rx="2.4" fill="#fff" stroke="#718896" stroke-width="1.4"/></g></svg>
<svg style="left:12px;top:157px" width="12.4" height="12.4" viewBox="0 0 12.4 12.4"><g transform="translate(0.300 0.500)"><rect x=".7" y=".7" width="11" height="11" rx="2.4" fill="#fff" stroke="#718896" stroke-width="1.4"/></g></svg>
<svg style="left:12px;top:75px" width="12.4" height="12.4" viewBox="0 0 12.4 12.4"><g transform="translate(0.300 0.000)"><rect x=".7" y=".7" width="11" height="11" rx="2.4" fill="#fff" stroke="#718896" stroke-width="1.4"/></g></svg>
<svg style="left:42px;top:215px" width="8.2" height="8.2" viewBox="0 0 8.2 8.2"><g transform="translate(0.500 0.400)"><circle cx="4.1" cy="4.1" r="4.1" fill="#5fbd83"/></g></svg>
<svg style="left:42px;top:270px" width="8.2" height="8.2" viewBox="0 0 8.2 8.2"><g transform="translate(0.500 0.400)"><circle cx="4.1" cy="4.1" r="4.1" fill="#5fbd83"/></g></svg>
<svg style="left:42px;top:296px" width="8.2" height="8.2" viewBox="0 0 8.2 8.2"><g transform="translate(0.500 0.480)"><circle cx="4.1" cy="4.1" r="4.1" fill="#5fbd83"/></g></svg>
<svg style="left:42px;top:322px" width="8.2" height="8.2" viewBox="0 0 8.2 8.2"><g transform="translate(0.500 0.560)"><circle cx="4.1" cy="4.1" r="4.1" fill="#5fbd83"/></g></svg>
<svg style="left:42px;top:348px" width="8.2" height="8.2" viewBox="0 0 8.2 8.2"><g transform="translate(0.500 0.640)"><circle cx="4.1" cy="4.1" r="4.1" fill="#5fbd83"/></g></svg>
<svg style="left:42px;top:374px" width="8.2" height="8.2" viewBox="0 0 8.2 8.2"><g transform="translate(0.500 0.720)"><circle cx="4.1" cy="4.1" r="4.1" fill="#5fbd83"/></g></svg>
<svg style="left:42px;top:400px" width="8.2" height="8.2" viewBox="0 0 8.2 8.2"><g transform="translate(0.500 0.800)"><circle cx="4.1" cy="4.1" r="4.1" fill="#5fbd83"/></g></svg>
<svg style="left:42px;top:426px" width="8.2" height="8.2" viewBox="0 0 8.2 8.2"><g transform="translate(0.500 0.880)"><circle cx="4.1" cy="4.1" r="4.1" fill="#5fbd83"/></g></svg>
<svg style="left:946px;top:168px" width="8.2" height="4.7" viewBox="0 0 8.2 4.7"><g transform="translate(0.000 0.600)"><path d="M0 0H8.2L4.1 4.7z" fill="#5f7080"/></g></svg>
<svg style="left:946px;top:221px" width="8.2" height="4.7" viewBox="0 0 8.2 4.7"><g transform="translate(0.000 0.000)"><path d="M0 0H8.2L4.1 4.7z" fill="#5f7080"/></g></svg>
<svg style="left:979px;top:566px" width="5.2" height="9" viewBox="0 0 5.2 9"><g transform="translate(0.500 0.500)"><path d="M5.2 0V9L0 4.5z" fill="#fff"/></g></svg>
</div>
<div id="t">
<span style="left:31.65px;top:17px;font-size:10px;font-weight:700;color:#1f5a8c;transform:scaleX(0.9223);">DASHBOARD</span>
<span style="left:104.65px;top:17px;font-size:10px;font-weight:700;color:#1f5a8c;transform:scaleX(0.9481);">IMPORT</span>
<span style="left:155.28px;top:17px;font-size:10px;font-weight:700;color:#1f5a8c;transform:scaleX(0.8989);">PLUGINS</span>
<span style="left:208.10px;top:17px;font-size:10px;font-weight:700;color:#1f5a8c;transform:scaleX(0.8610);">BEST PRACTICES</span>
<span style="left:369.01px;top:17px;font-size:10px;font-weight:700;color:#1f5a8c;transform:scaleX(0.9759);">MONITOR</span>
<span style="left:428.48px;top:17px;font-size:10px;font-weight:700;color:#1f5a8c;transform:scaleX(0.8831);">POLICIES</span>
<span style="left:482.29px;top:17px;font-size:10px;font-weight:700;color:#1f5a8c;transform:scaleX(0.8542);">OBJECTS</span>
<span style="left:535.43px;top:17px;font-size:10px;font-weight:700;color:#1f5a8c;transform:scaleX(0.9431);">NETWORK</span>
<span style="left:597.13px;top:17px;font-size:10px;font-weight:700;color:#1f5a8c;transform:scaleX(0.9177);">DEVICE</span>
<span style="left:643.63px;top:17px;font-size:10px;font-weight:700;color:#1f5a8c;transform:scaleX(0.9067);">TOOLS</span>
<span style="left:687.69px;top:17px;font-size:10px;font-weight:700;color:#1f5a8c;transform:scaleX(0.9038);">EXPORT</span>
<span style="left:296.02px;top:17px;font-size:10px;font-weight:400;color:#3d6d99;transform:scaleX(0.9270);">M. LEARNING</span>
<span style="left:941.96px;top:18px;font-size:10px;font-weight:700;color:#1f5a8c;transform:scaleX(0.9388);">Moval</span>
<span style="left:13.60px;top:49px;font-size:10.7px;font-weight:700;color:#ffffff;transform:scaleX(0.8761);">SEARCH RESULTS</span>
<span style="left:63.95px;top:77px;font-size:9.5px;font-weight:400;color:#404040;transform:scaleX(0.9532);">Name</span>
<span style="left:311.78px;top:77px;font-size:9.5px;font-weight:400;color:#404040;transform:scaleX(0.9071);">Vsys</span>
<span style="left:51.99px;top:105px;font-size:10.3px;font-weight:400;color:#404040;transform:scaleX(0.9514);">IPSec Tunnels (2)</span>
<span style="left:68.81px;top:133px;font-size:9.9px;font-weight:400;color:#404040;transform:scaleX(0.9444);">outside_map-1</span>
<span style="left:316.61px;top:133px;font-size:9.9px;font-weight:400;color:#404040;transform:scaleX(0.9458);">vsys1</span>
<span style="left:68.81px;top:159px;font-size:9.9px;font-weight:400;color:#404040;transform:scaleX(0.9393);">outside_map-5</span>
<span style="left:316.61px;top:159px;font-size:9.9px;font-weight:400;color:#404040;transform:scaleX(0.9458);">vsys1</span>
<span style="left:51.99px;top:186px;font-size:10.3px;font-weight:400;color:#404040;transform:scaleX(0.9919);">Nat Policies (1)</span>
<span style="left:68.58px;top:215px;font-size:9.9px;font-weight:400;color:#404040;transform:scaleX(0.9716);">AutoNat obj_any-01</span>
<span style="left:316.61px;top:215px;font-size:9.9px;font-weight:400;color:#404040;transform:scaleX(0.9458);">vsys1</span>
<span style="left:51.71px;top:241px;font-size:10.3px;font-weight:400;color:#404040;transform:scaleX(0.9823);">Address (7)</span>
<span style="left:68.76px;top:270px;font-size:9.9px;font-weight:400;color:#404040;transform:scaleX(0.9392);">obj_any-01</span>
<span style="left:316.61px;top:270px;font-size:9.9px;font-weight:400;color:#404040;transform:scaleX(0.9458);">vsys1</span>
<span style="left:68.76px;top:296px;font-size:9.9px;font-weight:400;color:#404040;transform:scaleX(0.9374);">obj_any-02</span>
<span style="left:316.61px;top:296px;font-size:9.9px;font-weight:400;color:#404040;transform:scaleX(0.9458);">vsys1</span>
<span style="left:68.76px;top:322px;font-size:9.9px;font-weight:400;color:#404040;transform:scaleX(0.9355);">obj_any-03</span>
<span style="left:316.61px;top:322px;font-size:9.9px;font-weight:400;color:#404040;transform:scaleX(0.9458);">vsys1</span>
<span style="left:68.76px;top:348px;font-size:9.9px;font-weight:400;color:#404040;transform:scaleX(0.9382);">obj_any-04</span>
<span style="left:316.61px;top:348px;font-size:9.9px;font-weight:400;color:#404040;transform:scaleX(0.9458);">vsys1</span>
<span style="left:68.76px;top:374px;font-size:9.9px;font-weight:400;color:#404040;transform:scaleX(0.9362);">obj_any-05</span>
<span style="left:316.61px;top:374px;font-size:9.9px;font-weight:400;color:#404040;transform:scaleX(0.9458);">vsys1</span>
<span style="left:68.76px;top:400px;font-size:9.9px;font-weight:400;color:#404040;transform:scaleX(0.9362);">obj_any-06</span>
<span style="left:316.61px;top:400px;font-size:9.9px;font-weight:400;color:#404040;transform:scaleX(0.9458);">vsys1</span>
<span style="left:68.76px;top:426px;font-size:9.9px;font-weight:400;color:#404040;transform:scaleX(0.9392);">obj_any-01</span>
<span style="left:316.61px;top:426px;font-size:9.9px;font-weight:400;color:#404040;transform:scaleX(0.9458);">vsys1</span>
<span style="left:96.40px;top:560px;font-size:10.1px;font-weight:400;color:#404040;transform:scaleX(0.8772);">1</span>
<span style="left:139.28px;top:560px;font-size:10.1px;font-weight:400;color:#404040;transform:scaleX(0.9907);">of 1</span>
<span style="left:276.71px;top:560px;font-size:10.1px;font-weight:400;color:#404040;transform:scaleX(1.0796);">200</span>
<span style="left:323.81px;top:560px;font-size:10.1px;font-weight:400;color:#404040;transform:scaleX(1.0007);">1 - 10 of 10</span>
<span style="left:392.38px;top:48px;font-size:10.7px;font-weight:700;color:#ffffff;transform:scaleX(0.9619);">OPTIONS</span>
<span style="left:413.58px;top:77px;font-size:10px;font-weight:700;color:#1f5a8c;transform:scaleX(0.8841);">PREFIX / SUFFIX / REPLACE</span>
<span style="left:569.46px;top:77px;font-size:10px;font-weight:700;color:#1f5a8c;transform:scaleX(0.9013);">RENAME</span>
<span style="left:644.85px;top:77px;font-size:10px;font-weight:700;color:#1f5a8c;transform:scaleX(0.8594);">SEARCH &amp; REPLACE</span>
<span style="left:391.96px;top:110px;font-size:10px;font-weight:700;color:#1f5a8c;transform:scaleX(0.9510);">FOUND IN</span>
<span style="left:680.87px;top:110px;font-size:10px;font-weight:700;color:#199ad6;transform:scaleX(0.8431);text-decoration:underline;">REPLACE</span>
<span style="left:723.51px;top:110px;font-size:10px;font-weight:700;color:#2a7cb8;transform:scaleX(0.9064);">(6)</span>
<span style="left:451.94px;top:142px;font-size:9.5px;font-weight:400;color:#404040;transform:scaleX(0.9949);">Objects</span>
<span style="left:598.08px;top:142px;font-size:9.5px;font-weight:400;color:#404040;transform:scaleX(1.0094);">Position</span>
<span style="left:689.38px;top:142px;font-size:9.5px;font-weight:400;color:#404040;transform:scaleX(0.9173);">Vsys</span>
<span style="left:431.18px;top:169px;font-size:10.3px;font-weight:400;color:#404040;transform:scaleX(0.9814);">obj_any-01 (1)</span>
<span style="left:457.05px;top:198px;font-size:9.9px;font-weight:400;color:#404040;transform:scaleX(0.9604);">19]  AutoNat obj_any-01</span>
<span style="left:602.80px;top:198px;font-size:9.9px;font-weight:400;color:#404040;transform:scaleX(0.9453);">Source</span>
<span style="left:694.41px;top:198px;font-size:9.9px;font-weight:400;color:#404040;transform:scaleX(0.9458);">vsys1</span>
<span style="left:431.18px;top:227px;font-size:10.3px;font-weight:400;color:#404040;transform:scaleX(0.9813);">obj_any-02 (1)</span>
<span style="left:457.29px;top:256px;font-size:9.9px;font-weight:400;color:#404040;transform:scaleX(0.9558);">20]  AutoNat obj_any-02</span>
<span style="left:602.80px;top:256px;font-size:9.9px;font-weight:400;color:#404040;transform:scaleX(0.9453);">Source</span>
<span style="left:694.41px;top:256px;font-size:9.9px;font-weight:400;color:#404040;transform:scaleX(0.9458);">vsys1</span>
<span style="left:431.18px;top:286px;font-size:10.3px;font-weight:400;color:#404040;transform:scaleX(0.9813);">obj_any-03 (1)</span>
<span style="left:457.29px;top:315px;font-size:9.9px;font-weight:400;color:#404040;transform:scaleX(0.9540);">21]  AutoNat obj_any-03</span>
<span style="left:602.80px;top:315px;font-size:9.9px;font-weight:400;color:#404040;transform:scaleX(0.9453);">Source</span>
<span style="left:694.41px;top:315px;font-size:9.9px;font-weight:400;color:#404040;transform:scaleX(0.9458);">vsys1</span>
<span style="left:431.18px;top:344px;font-size:10.3px;font-weight:400;color:#404040;transform:scaleX(0.9814);">obj_any-04 (1)</span>
<span style="left:457.31px;top:373px;font-size:9.9px;font-weight:400;color:#404040;transform:scaleX(0.9575);">34]  AutoNat obj_any-04</span>
<span style="left:602.80px;top:373px;font-size:9.9px;font-weight:400;color:#404040;transform:scaleX(0.9453);">Source</span>
<span style="left:694.41px;top:373px;font-size:9.9px;font-weight:400;color:#404040;transform:scaleX(0.9458);">vsys1</span>
<span style="left:431.18px;top:403px;font-size:10.3px;font-weight:400;color:#404040;transform:scaleX(0.9814);">obj_any-05 (1)</span>
<span style="left:457.30px;top:432px;font-size:9.9px;font-weight:400;color:#404040;transform:scaleX(0.9549);">35]  AutoNat obj_any-05</span>
<span style="left:602.80px;top:432px;font-size:9.9px;font-weight:400;color:#404040;transform:scaleX(0.9453);">Source</span>
<span style="left:694.41px;top:432px;font-size:9.9px;font-weight:400;color:#404040;transform:scaleX(0.9458);">vsys1</span>
<span style="left:431.18px;top:462px;font-size:10.3px;font-weight:400;color:#404040;transform:scaleX(0.9814);">obj_any-06 (1)</span>
<span style="left:457.30px;top:490px;font-size:9.9px;font-weight:400;color:#404040;transform:scaleX(0.9551);">36]  AutoNat obj_any-06</span>
<span style="left:602.80px;top:490px;font-size:9.9px;font-weight:400;color:#404040;transform:scaleX(0.9453);">Source</span>
<span style="left:694.41px;top:490px;font-size:9.9px;font-weight:400;color:#404040;transform:scaleX(0.9458);">vsys1</span>
<span style="left:417.17px;top:561px;font-size:10px;font-weight:700;color:#ffffff;transform:scaleX(0.9263);">Clear</span>
<span style="left:786.18px;top:144px;font-size:10.2px;font-weight:700;color:#647a8c;transform:scaleX(0.9239);">Replace by:</span>
<span style="left:791.00px;top:166px;font-size:10.2px;font-weight:400;color:#404040;transform:scaleX(1.0025);">Address</span>
<span style="left:785.65px;top:196px;font-size:10px;font-weight:700;color:#647a8c;transform:scaleX(0.9637);">To:</span>
<span style="left:796.53px;top:234px;font-size:10.1px;font-weight:400;color:#404040;transform:scaleX(1.0362);">252.0.0.0-252.255.255.255</span>
<span style="left:796.53px;top:262px;font-size:10.1px;font-weight:400;color:#404040;transform:scaleX(1.0362);">253.0.0.0-253.255.255.255</span>
<span style="left:796.53px;top:290px;font-size:10.1px;font-weight:400;color:#404040;transform:scaleX(1.0362);">254.0.0.0-254.255.255.255</span>
<span style="left:796.53px;top:318px;font-size:10.1px;font-weight:400;color:#404040;transform:scaleX(1.0363);">255.0.0.0-255.255.255.255</span>
<span style="left:796.15px;top:346px;font-size:10.1px;font-weight:400;color:#404040;transform:scaleX(1.1055);">A1</span>
<span style="left:796.16px;top:373px;font-size:10.1px;font-weight:400;color:#404040;transform:scaleX(1.0495);">A2</span>
<span style="left:796.11px;top:401px;font-size:10.1px;font-weight:400;color:#404040;transform:scaleX(1.0662);">AD</span>
<span style="left:796.21px;top:429px;font-size:10.1px;font-weight:400;color:#404040;transform:scaleX(0.9460);">AE</span>
<span style="left:796.18px;top:457px;font-size:10.1px;font-weight:400;color:#404040;transform:scaleX(0.9657);">AF</span>
<span style="left:858.58px;top:560px;font-size:9.7px;font-weight:700;color:#ffffff;transform:scaleX(0.8955);">Replace All</span>
<span style="left:985.91px;top:69.36px;font-size:11px;font-weight:700;color:#ffffff;transform:rotate(90deg) scaleX(0.8992);">Extended Information</span>
</div>
</body></html>
